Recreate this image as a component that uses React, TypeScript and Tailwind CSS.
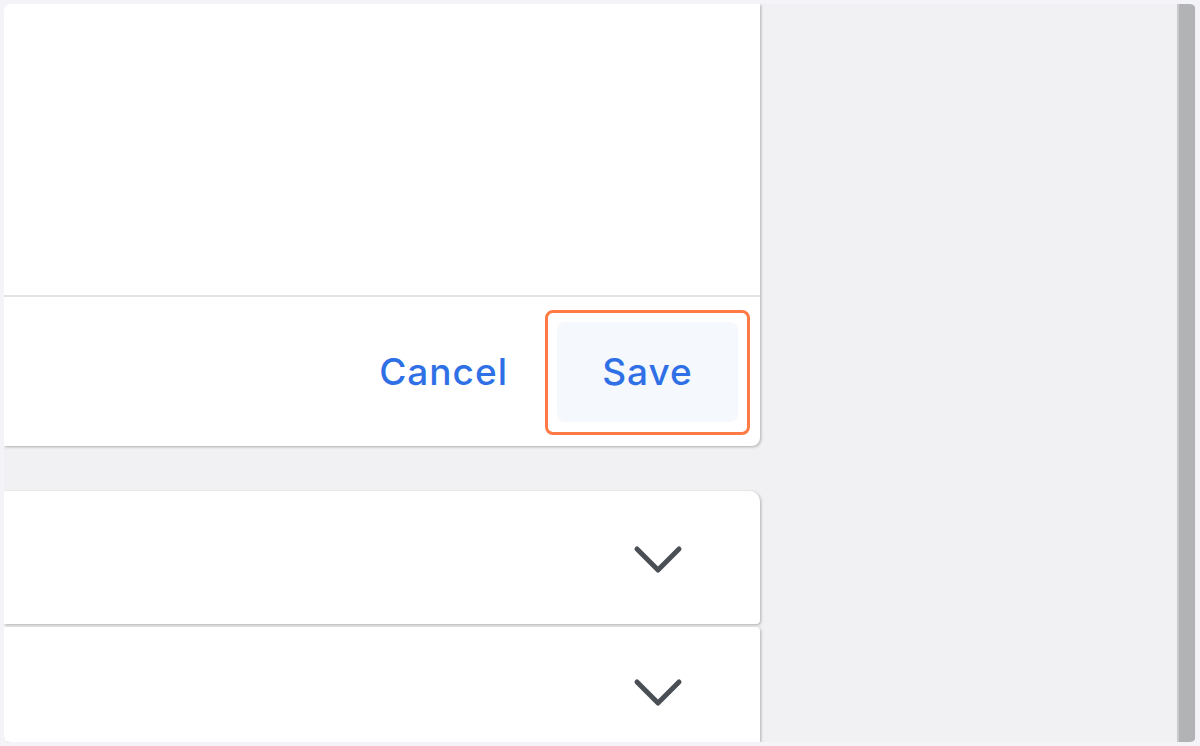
import { ReactNode } from "react";

const Chevron = () => (
  <svg width="50" height="32" viewBox="0 0 50 32" fill="none">
    <polyline
      points="4,5 25,26 46,5"
      stroke="#4a4f56"
      strokeWidth="5"
      strokeLinecap="round"
      strokeLinejoin="round"
    />
  </svg>
);

const Section = ({ children, className }: { children: ReactNode; className: string }) => (
  <div
    className={`bg-white flex items-center justify-end pr-[77px] shadow-[1px_1px_3px_rgba(0,0,0,0.28)] ${className}`}
  >
    {children}
  </div>
);

export default function App() {
  return (
    <div className="w-[1200px] h-[746px] bg-[#f4f3f8] p-1 overflow-hidden font-['Inter',sans-serif]">
      <div className="h-full flex bg-[#f1f1f4] rounded-[6px] overflow-hidden">
        <div className="w-[756px] flex flex-col">
          <div className="h-[442px] bg-white rounded-br-[8px] shadow-[1px_1px_3px_rgba(0,0,0,0.28)] flex flex-col">
            <div className="h-[293px] border-b-2 border-[#e3e3e6]"></div>
            <div className="flex-1 flex items-center justify-end gap-[49px] pr-[22px]">
              <button className="text-[37px] font-medium text-[#2f70e6] tracking-[1px]">
                Cancel
              </button>
              <div className="relative">
                <button className="w-[181px] h-[100px] rounded-[8px] bg-[#f5f8fd] text-[37px] font-medium text-[#2f70e6] tracking-[1px]">
                  Save
                </button>
                <div className="absolute -inset-x-[12px] -top-[12px] -bottom-[13px] rounded-[8px] border-[3px] border-[#ff7a45]"></div>
              </div>
            </div>
          </div>
          <Section className="mt-[45px] h-[133px] rounded-tr-[10px] rounded-br-[4px]">
            <div className="mt-[4px]">
              <Chevron />
            </div>
          </Section>
          <Section className="mt-[3px] flex-1 rounded-tr-[4px]">
            <div className="mt-[16px]">
              <Chevron />
            </div>
          </Section>
        </div>
        <div className="flex-1"></div>
        <div className="w-[18px] mr-[1px] bg-[#b2b3b5] border-l-2 border-[#c9cacc]"></div>
      </div>
    </div>
  );
}
